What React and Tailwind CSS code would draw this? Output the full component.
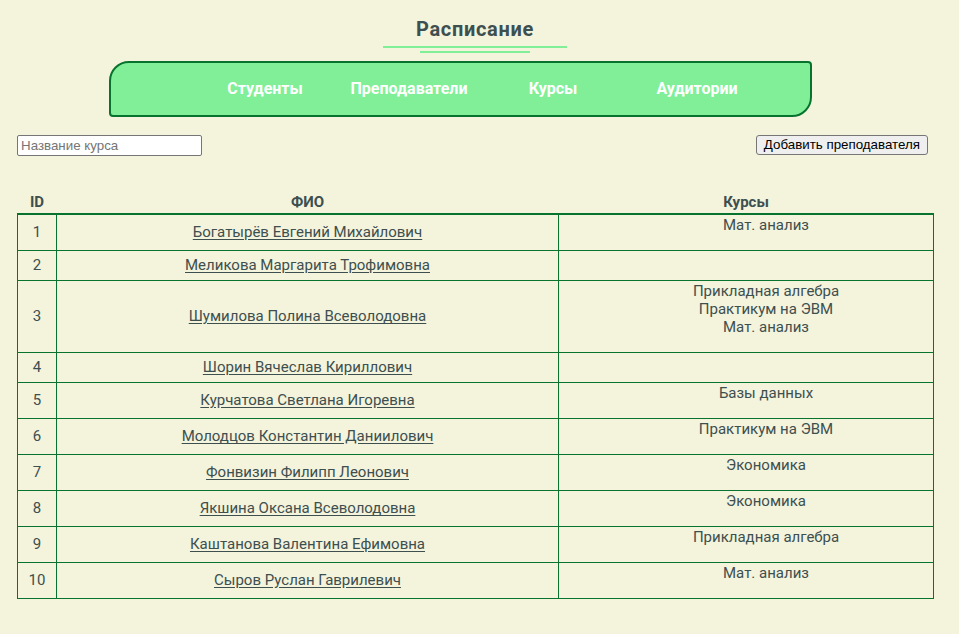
import React from 'react';

const teachers = [
  { id: 1, name: 'Богатырёв Евгений Михайлович', courses: ['Мат. анализ'] },
  { id: 2, name: 'Меликова Маргарита Трофимовна', courses: [] },
  { id: 3, name: 'Шумилова Полина Всеволодовна', courses: ['Прикладная алгебра', 'Практикум на ЭВМ', 'Мат. анализ'] },
  { id: 4, name: 'Шорин Вячеслав Кириллович', courses: [] },
  { id: 5, name: 'Курчатова Светлана Игоревна', courses: ['Базы данных'] },
  { id: 6, name: 'Молодцов Константин Даниилович', courses: ['Практикум на ЭВМ'] },
  { id: 7, name: 'Фонвизин Филипп Леонович', courses: ['Экономика'] },
  { id: 8, name: 'Якшина Оксана Всеволодовна', courses: ['Экономика'] },
  { id: 9, name: 'Каштанова Валентина Ефимовна', courses: ['Прикладная алгебра'] },
  { id: 10, name: 'Сыров Руслан Гаврилевич', courses: ['Мат. анализ'] },
];

const links = ['Студенты', 'Преподаватели', 'Курсы', 'Аудитории'];

export default function App() {
  return (
    <div className="min-h-screen bg-[#f4f3dc] font-['Roboto',sans-serif] text-[15px] text-[#3d4f4f]">
      {/* Header */}
      <header className="flex flex-col items-center pt-[17px]">
        <h1 className="ml-[-9px] text-[20px] font-bold leading-[24px] tracking-[0.7px]">Расписание</h1>
        <div className="mt-[5px] ml-[-9px] h-[2px] w-[184px] bg-[#80ef98]" />
        <div className="mt-[3px] ml-[-9px] h-[2px] w-[110px] bg-[#80ef98]" />
      </header>

      <nav className="ml-[109px] mt-[8px] flex h-[56px] w-[703px] items-center rounded-tl-[20px] rounded-br-[20px] rounded-tr-[4px] rounded-bl-[4px] border-2 border-[#08732e] bg-[#80ef98] pl-[82px]">
        {links.map((l) => (
          <a key={l} className="w-[144px] text-center text-[16px] font-bold text-white">{l}</a>
        ))}
      </nav>

      {/* Controls */}
      <div className="mt-[18px] flex items-start justify-between pl-[17px] pr-[31px]">
        <input
          placeholder="Название курса"
          className="h-[21px] w-[185px] rounded-[2px] border border-[#767676] bg-white px-[3px] font-['Liberation_Sans',sans-serif] text-[13.33px] text-black placeholder:text-[#757575]"
        />
        <button className="h-[20px] rounded-[3px] border border-[#767676] bg-[#efefef] px-[7px] font-['Liberation_Sans',sans-serif] text-[13.33px] leading-[16px] text-black">
          Добавить преподавателя
        </button>
      </div>

      {/* Table */}
      <div className="mt-[36px] pl-[17px]">
        <table className="w-[917px] border-collapse">
          <thead>
            <tr className="border-b-2 border-[#08732e]">
              <th className="w-[39px] pt-[1px] pb-[2px] text-center text-[15px] font-bold leading-[18px]">ID</th>
              <th className="w-[502px] pt-[1px] pb-[2px] text-center text-[15px] font-bold leading-[18px]">ФИО</th>
              <th className="pt-[1px] pb-[2px] text-center text-[15px] font-bold leading-[18px]">Курсы</th>
            </tr>
          </thead>
          <tbody>
            {teachers.map((t) => (
              <tr key={t.id}>
                <td className="border border-[#08732e] pt-[5px] pb-[6px] text-center align-middle leading-[18px]">{t.id}</td>
                <td className="border border-[#08732e] pt-[5px] pb-[6px] text-center align-middle leading-[18px]">
                  <a className="underline underline-offset-[2px]">{t.name}</a>
                </td>
                <td className="border border-[#08732e] pt-[1px] pb-0 text-center align-top leading-[18px]">
                  <ul className={t.courses.length ? 'mb-[16px] pl-[40px]' : 'pl-[40px]'}>
                    {t.courses.map((c) => (
                      <li key={c}>{c}</li>
                    ))}
                  </ul>
                </td>
              </tr>
            ))}
          </tbody>
        </table>
      </div>
    </div>
  );
}
